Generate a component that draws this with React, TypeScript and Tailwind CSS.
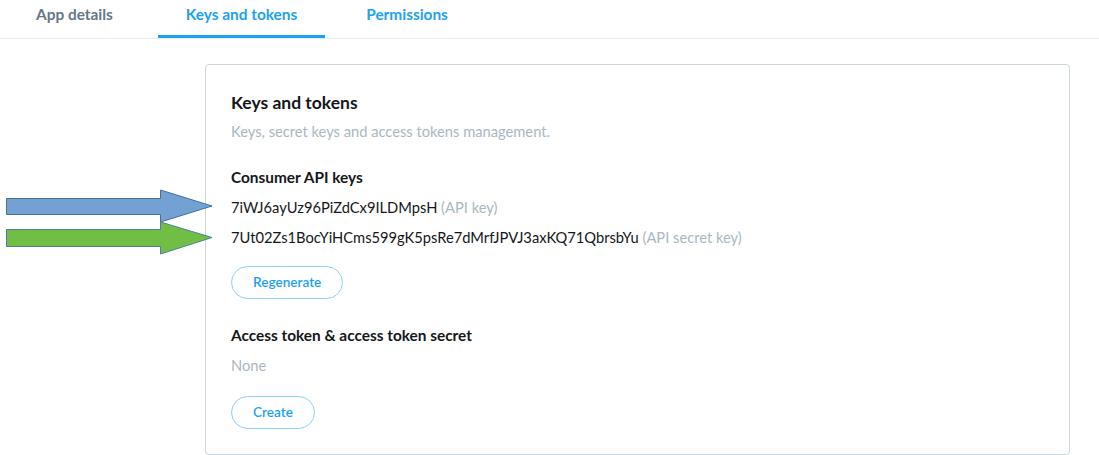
import React from 'react'

const tabs = [
  { label: 'App details', active: false },
  { label: 'Keys and tokens', active: true },
  { label: 'Permissions', active: false },
]

function Arrows() {
  return (
    <svg
      className="absolute left-0 top-[185px]"
      width="220"
      height="75"
      viewBox="0 0 220 75"
    >
      <path
        d="M6.5 13.5 H160.5 V5 L212 21 L160.5 37 V29.5 H6.5 Z"
        fill="#73a1d4"
        stroke="#41719c"
        strokeWidth="1"
      />
      <path
        d="M6.5 44.5 H160.5 V37 L212 52.5 L160.5 69 V61.5 H6.5 Z"
        fill="#70bf44"
        stroke="#4f7fa0"
        strokeWidth="1"
      />
    </svg>
  )
}

function PillButton({ children }: { children: React.ReactNode }) {
  return (
    <button className="h-[33px] rounded-full border border-[#8dd0f8] px-[21px] text-[13.6px] font-semibold text-[#1da1f2]">
      {children}
    </button>
  )
}

export default function App() {
  return (
    <div className="relative min-h-[455px] bg-white font-['Lato','Noto_Sans',sans-serif] text-[14.7px] text-[#14171a]">
      {/* Tabs */}
      <nav className="flex h-[39px] border-b border-[#e6ecf0] pl-[8px]">
        {tabs.map((t, i) => (
          <div
            key={t.label}
            className={
              'h-[38px] px-[28px] pt-[4px] text-[15.4px] font-bold leading-[20px] ' +
              (i === 1 ? 'ml-[17px] ' : i === 2 ? 'ml-[13px] ' : '') +
              (t.active
                ? 'border-b-[3px] border-[#1da1f2] text-[#1da1f2]'
                : i === 0
                  ? 'border-b-[3px] border-transparent text-[#657786]'
                  : 'border-b-[3px] border-transparent text-[#1da1f2]')
            }
          >
            {t.label}
          </div>
        ))}
      </nav>

      {/* Card */}
      <section className="ml-[205px] mt-[25px] w-[865px] rounded-[4px] border border-[#ccd6dd] px-[25px] pb-[25px] pt-[27px]">
        <h2 className="text-[17.5px] font-bold leading-[22px]">Keys and tokens</h2>
        <p className="mt-[7px] leading-[20px] text-[#aab8c2]">
          Keys, secret keys and access tokens management.
        </p>

        <h3 className="mt-[26px] text-[15.4px] font-bold leading-[20px]">Consumer API keys</h3>
        <div className="mt-[10px] leading-[20px]">
          7iWJ6ayUz96PiZdCx9ILDMpsH <span className="text-[#aab8c2]">(API key)</span>
        </div>
        <div className="mt-[10px] leading-[20px]">
          7Ut02Zs1BocYiHCms599gK5psRe7dMrfJPVJ3axKQ71QbrsbYu{' '}
          <span className="text-[#aab8c2]">(API secret key)</span>
        </div>
        <div className="mt-[19px]">
          <PillButton>Regenerate</PillButton>
        </div>

        <h3 className="mt-[26px] text-[15.4px] font-bold leading-[20px]">
          Access token &amp; access token secret
        </h3>
        <div className="mt-[10px] leading-[20px] text-[#aab8c2]">None</div>
        <div className="mt-[21px]">
          <PillButton>Create</PillButton>
        </div>
      </section>

      <Arrows />
    </div>
  )
}
